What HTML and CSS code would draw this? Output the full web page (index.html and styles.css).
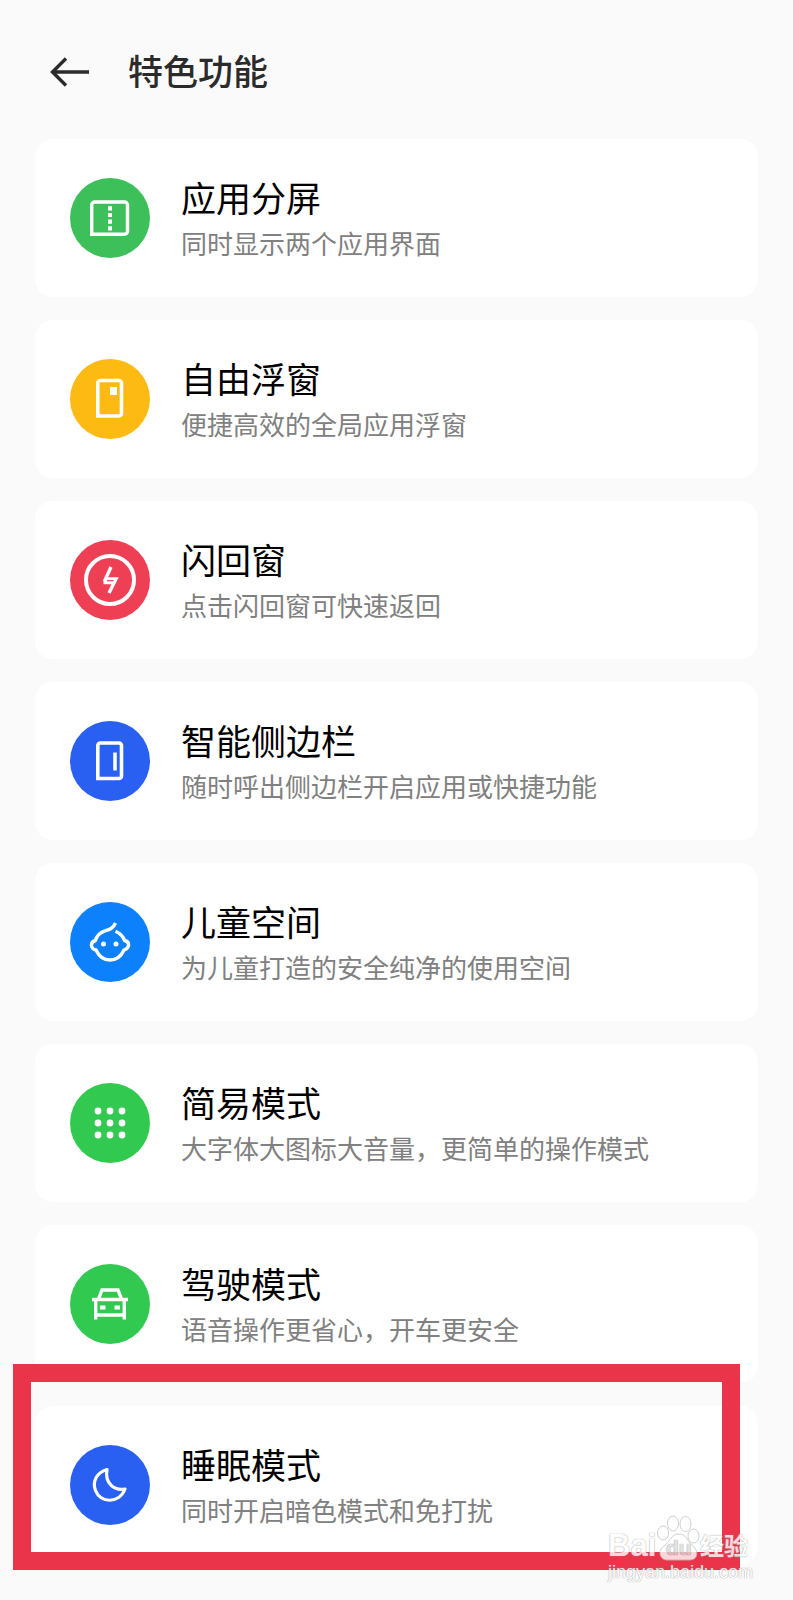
FILE: index.html
```html
<!DOCTYPE html>
<html lang="zh-CN">
<head>
    <meta charset="UTF-8">
    <meta name="viewport" content="width=device-width, initial-scale=1.0">
    <title>特色功能</title>
    <link rel="stylesheet" href="styles.css">
</head>
<body>
    <header class="header">
        <button class="back" type="button" aria-label="返回">
            <svg viewBox="0 0 40 32" fill="none" stroke="#2b2b2b" stroke-width="3.4">
                <path d="M39 16H3M16 2.5L2.5 16L16 29.5" />
            </svg>
        </button>
        <h1 class="title">特色功能</h1>
    </header>

    <main class="list">
        <a class="card" href="#split">
            <span class="icon green-dark">
                <svg viewBox="0 0 80 80">
                    <path d="M21.7 56.3V27a3 3 0 0 1 3-3H54.500a3 3 0 0 1 3 3V53.300a3 3 0 0 1-3 3z" fill="none" stroke="#fff" stroke-width="3.4" />
                    <path d="M40 28.2V53" stroke="#fff" stroke-width="4" stroke-dasharray="4.2 2.5" />
                </svg>
            </span>
            <span class="text">
                <span class="name">应用分屏</span>
                <span class="desc">同时显示两个应用界面</span>
            </span>
        </a>
        <a class="card" href="#float">
            <span class="icon yellow">
                <svg viewBox="0 0 80 80">
                    <path d="M27.8 57V24a2.5 2.5 0 0 1 2.5-2.5H49a2.5 2.5 0 0 1 2.5 2.5V54.500a2.5 2.5 0 0 1-2.5 2.5z" fill="none" stroke="#fff" stroke-width="3.6" />
                    <rect x="40" y="28" width="7" height="8" fill="#fff" />
                </svg>
            </span>
            <span class="text">
                <span class="name">自由浮窗</span>
                <span class="desc">便捷高效的全局应用浮窗</span>
            </span>
        </a>
        <a class="card" href="#flashback">
            <span class="icon red">
                <svg viewBox="0 0 80 80" fill="none" stroke="#fff">
                    <circle cx="40" cy="40" r="24" stroke-width="4" />
                    <path d="M41 27L35.500 39H46L39 53M33.500 42.500H44" stroke-width="3.4" />
                    <path d="M37 40.7H43.500" stroke="#ee3f55" stroke-width="1.2" />
                </svg>
            </span>
            <span class="text">
                <span class="name">闪回窗</span>
                <span class="desc">点击闪回窗可快速返回</span>
            </span>
        </a>
        <a class="card" href="#sidebar">
            <span class="icon blue">
                <svg viewBox="0 0 80 80" fill="none" stroke="#fff" stroke-width="3.6">
                    <path d="M27.8 57.500V24.500a2.5 2.5 0 0 1 2.5-2.5H49a2.5 2.5 0 0 1 2.5 2.5V55a2.5 2.5 0 0 1-2.5 2.5z" />
                    <path d="M45 31.500V49.500" />
                </svg>
            </span>
            <span class="text">
                <span class="name">智能侧边栏</span>
                <span class="desc">随时呼出侧边栏开启应用或快捷功能</span>
            </span>
        </a>
        <a class="card" href="#kids">
            <span class="icon sky">
                <svg viewBox="0 0 80 80" fill="none" stroke="#fff" stroke-width="3.4">
                    <path d="M45.500 21C43 27 39 27.500 35 28.800C30 30.500 26.500 34 25.500 38.500C20 40 20 46.500 26 48C29 54.500 34 58 40 58S51 54.500 54 48C60 46 60 39.500 54.500 38.500C53 34 50.500 31.500 45.500 29.300" stroke-linejoin="round" />
                    <circle cx="33.5" cy="42" r="2.5" fill="#fff" stroke="none" />
                    <circle cx="46" cy="42" r="2.5" fill="#fff" stroke="none" />
                </svg>
            </span>
            <span class="text">
                <span class="name">儿童空间</span>
                <span class="desc">为儿童打造的安全纯净的使用空间</span>
            </span>
        </a>
        <a class="card" href="#simple">
            <span class="icon green">
                <svg viewBox="0 0 80 80" fill="#fff">
                    <circle cx="28" cy="28" r="3.4" />
                    <circle cx="40" cy="28" r="3.4" />
                    <circle cx="52" cy="28" r="3.4" />
                    <circle cx="28" cy="40" r="3.4" />
                    <circle cx="40" cy="40" r="3.4" />
                    <circle cx="52" cy="40" r="3.4" />
                    <circle cx="28" cy="52" r="3.4" />
                    <circle cx="40" cy="52" r="3.4" />
                    <circle cx="52" cy="52" r="3.4" />
                </svg>
            </span>
            <span class="text">
                <span class="name">简易模式</span>
                <span class="desc">大字体大图标大音量，更简单的操作模式</span>
            </span>
        </a>
        <a class="card" href="#driving">
            <span class="icon green">
                <svg viewBox="0 0 80 80" fill="none" stroke="#fff" stroke-width="3.4">
                    <path d="M22 35.500H58M28.500 35L32 26H48L51.500 35M25.700 35V55.500M54.300 35V55.500M25.700 51H54.300" />
                    <path d="M30 43.500H35.500M44.500 43.500H50" stroke-width="4" />
                </svg>
            </span>
            <span class="text">
                <span class="name">驾驶模式</span>
                <span class="desc">语音操作更省心，开车更安全</span>
            </span>
        </a>
        <a class="card marked" href="#sleep">
            <span class="icon blue">
                <svg viewBox="0 0 80 80">
                    <path d="M37 24.500C27 27.500 22 36 25.500 45.500C30 58 49 59.500 55 44C44 46 34.500 38 37 24.500z" fill="none" stroke="#fff" stroke-width="3.2" stroke-linejoin="round" />
                </svg>
            </span>
            <span class="text">
                <span class="name">睡眠模式</span>
                <span class="desc">同时开启暗色模式和免打扰</span>
            </span>
        </a>
    </main>

    <div class="watermark">
        <div class="logo">
            <span class="bai">Bai</span>
            <span class="paw">
                <svg viewBox="0 0 44 46" fill="#fff" stroke="#c4c4c4">
                    <ellipse cx="7" cy="18" rx="5.5" ry="7" />
                    <ellipse cx="17" cy="8.5" rx="5.5" ry="7.5" />
                    <ellipse cx="29.5" cy="9" rx="5.5" ry="7.5" />
                    <ellipse cx="37.5" cy="21" rx="5.5" ry="7" />
                    <path d="M23 19C15 19 14 27 8 31C1 36 4 45 11 45H34C42 45 43 36 37 31C31 27 31 19 23 19z" />
                </svg>
                <span class="du">du</span>
            </span>
            <span class="jingyan">经验</span>
        </div>
        <div class="site">jingyan.baidu.com</div>
    </div>
</body>
</html>
```

FILE: styles.css
```css
* {
    box-sizing: border-box;
}

body {
    position: relative;
    margin: 0;
    padding: 0 35px 36px;
    background-color: #fafafa;
    font-family: 'Noto Sans CJK SC', sans-serif;
}

.header {
    display: flex;
    align-items: center;
    gap: 38px;
    height: 139px;
    padding: 4px 15px 0;
}

.back {
    width: 40px;
    height: 32px;
    padding: 0;
    border: 0;
    background: none;
    cursor: pointer;
}

.back svg,
.icon svg,
.paw svg {
    display: block;
    width: 100%;
    height: 100%;
}

.title {
    margin: 0;
    padding-bottom: 3px;
    font-size: 35px;
    font-weight: 500;
    line-height: 48px;
    color: #2b2b2b;
}

.list {
    display: flex;
    flex-direction: column;
    gap: 23px;
}

.card {
    display: flex;
    align-items: center;
    gap: 31px;
    height: 158px;
    padding: 0 35px;
    border-radius: 18px;
    background-color: #fff;
    color: #000;
    text-decoration: none;
}

.icon {
    flex: none;
    width: 80px;
    height: 80px;
    border-radius: 50%;
}

.green-dark {
    background-color: #3dc05a;
}

.yellow {
    background-color: #fdba12;
}

.red {
    background-color: #ee3f55;
}

.blue {
    background-color: #2a60f2;
}

.sky {
    background-color: #0d80fb;
}

.green {
    background-color: #31c950;
}

.text {
    display: flex;
    flex-direction: column;
    gap: 2px;
    padding-bottom: 2px;
}

.name {
    font-size: 35px;
    line-height: 50px;
}

.desc {
    font-size: 26px;
    line-height: 38px;
    color: #808080;
}

/* 红色标注框 */
.marked {
    position: relative;
}

.marked::after {
    content: "";
    position: absolute;
    top: -42px;
    right: 18px;
    bottom: -6px;
    left: -22px;
    border: 18px solid #ea3449;
}

/* 水印 */
.watermark {
    position: absolute;
    right: 43px;
    bottom: 17px;
    width: 142px;
    font-family: 'Liberation Sans', 'Noto Sans CJK SC', sans-serif;
    color: #fff;
    opacity: 0.8;
    text-shadow: 0 0 1px #999, 0 0 1px #999;
}

.logo {
    display: flex;
    align-items: flex-end;
    height: 46px;
}

.bai {
    width: 48px;
    font-size: 31px;
    font-weight: bold;
    line-height: 30px;
}

.paw {
    position: relative;
    width: 44px;
    height: 46px;
}

.du {
    position: absolute;
    bottom: 2px;
    left: 10px;
    font-size: 21px;
    font-weight: bold;
    line-height: 22px;
    color: #ddd;
}

.jingyan {
    font-size: 24px;
    font-weight: bold;
    line-height: 28px;
}

.site {
    font-size: 18px;
    line-height: 22px;
}
```
